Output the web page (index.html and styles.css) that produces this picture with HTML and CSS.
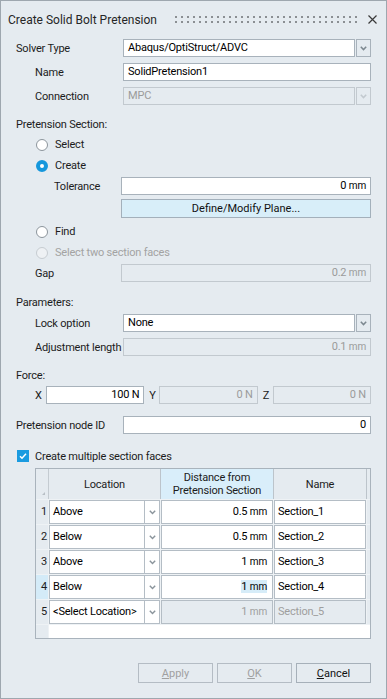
FILE: index.html
```html
<!DOCTYPE html>
<html lang="en">
<head>
    <meta charset="UTF-8">
    <meta name="viewport" content="width=device-width, initial-scale=1.0">
    <title>Create Solid Bolt Pretension</title>
    <link rel="stylesheet" href="styles.css">
</head>
<body>
    <div class="dialog">
        <div class="titlebar">
            <span class="title">Create Solid Bolt Pretension</span>
            <span class="grip"></span>
            <svg class="close" width="9" height="9" viewBox="0 0 9 9"><path d="M0.5 0.5 L8.5 8.5 M8.5 0.5 L0.5 8.5" stroke="#3a3a3a" stroke-width="1.2" fill="none"/></svg>
        </div>

        <div class="body">
            <div class="row first">
                <label class="lbl">Solver Type</label>
                <div class="combo">
                    <div class="field">Abaqus/OptiStruct/ADVC</div>
                    <span class="combo-btn"><svg width="7" height="5" viewBox="0 0 7 5"><path d="M0.8 0.8 L3.5 3.6 L6.2 0.8" stroke="#7d8890" stroke-width="1.5" fill="none"/></svg></span>
                </div>
            </div>
            <div class="row sub">
                <label class="lbl">Name</label>
                <div class="field">SolidPretension1</div>
            </div>
            <div class="row sub">
                <label class="lbl">Connection</label>
                <div class="combo disabled">
                    <div class="field">MPC</div>
                    <span class="combo-btn"><svg width="7" height="5" viewBox="0 0 7 5"><path d="M0.8 0.8 L3.5 3.6 L6.2 0.8" stroke="#c2c9cf" stroke-width="1.5" fill="none"/></svg></span>
                </div>
            </div>

            <div class="section">Pretension Section:</div>
            <div class="row radio-row">
                <span class="radio"></span>Select
            </div>
            <div class="row radio-row">
                <span class="radio checked"></span>Create
            </div>
            <div class="row deep">
                <label class="lbl">Tolerance</label>
                <div class="field num">0 <span class="unit">mm</span></div>
            </div>
            <div class="row deep btn-row">
                <span class="lbl"></span>
                <button class="plane-btn">Define/Modify Plane...</button>
            </div>
            <div class="row radio-row find">
                <span class="radio"></span>Find
            </div>
            <div class="row radio-row muted">
                <span class="radio off"></span>Select two section faces
            </div>
            <div class="row sub wide">
                <label class="lbl">Gap</label>
                <div class="field num disabled">0.2 <span class="unit">mm</span></div>
            </div>

            <div class="section params">Parameters:</div>
            <div class="row sub">
                <label class="lbl">Lock option</label>
                <div class="combo">
                    <div class="field">None</div>
                    <span class="combo-btn"><svg width="7" height="5" viewBox="0 0 7 5"><path d="M0.8 0.8 L3.5 3.6 L6.2 0.8" stroke="#7d8890" stroke-width="1.5" fill="none"/></svg></span>
                </div>
            </div>
            <div class="row sub">
                <label class="lbl">Adjustment length</label>
                <div class="field num disabled">0.1 <span class="unit">mm</span></div>
            </div>

            <div class="section">Force:</div>
            <div class="row force-row">
                <label class="axis">X</label>
                <div class="field num">100 N</div>
                <label class="axis">Y</label>
                <div class="field num disabled">0 N</div>
                <label class="axis">Z</label>
                <div class="field num disabled">0 N</div>
            </div>

            <div class="row node-row">
                <label class="lbl">Pretension node ID</label>
                <div class="field num">0</div>
            </div>

            <div class="row check-row">
                <span class="checkbox"><svg width="12" height="12" viewBox="0 0 12 12"><path d="M3 6.2 L5 8.2 L9 3.8" stroke="#fff" stroke-width="1.5" fill="none"/></svg></span>
                Create multiple section faces
            </div>

            <div class="table">
                <div class="grid">
                    <div class="corner"><span class="corner-mark"></span></div>
                    <div class="th">Location</div>
                    <div class="th active"><span>Distance from<br>Pretension Section</span></div>
                    <div class="th">Name</div>
                    <div class="th end"></div>

                    <div class="rh">1</div>
                    <div class="cell loc"><span class="loc-text">Above</span><span class="cell-btn"><svg width="7" height="5" viewBox="0 0 7 5"><path d="M0.8 0.8 L3.5 3.6 L6.2 0.8" stroke="#8a949b" stroke-width="1.4" fill="none"/></svg></span></div>
                    <div class="cell num">0.5 <span class="unit">mm</span></div>
                    <div class="cell">Section_1</div>
                    <div class="gap-cell"></div>

                    <div class="rh">2</div>
                    <div class="cell loc"><span class="loc-text">Below</span><span class="cell-btn"><svg width="7" height="5" viewBox="0 0 7 5"><path d="M0.8 0.8 L3.5 3.6 L6.2 0.8" stroke="#8a949b" stroke-width="1.4" fill="none"/></svg></span></div>
                    <div class="cell num">0.5 <span class="unit">mm</span></div>
                    <div class="cell">Section_2</div>
                    <div class="gap-cell"></div>

                    <div class="rh">3</div>
                    <div class="cell loc"><span class="loc-text">Above</span><span class="cell-btn"><svg width="7" height="5" viewBox="0 0 7 5"><path d="M0.8 0.8 L3.5 3.6 L6.2 0.8" stroke="#8a949b" stroke-width="1.4" fill="none"/></svg></span></div>
                    <div class="cell num">1 <span class="unit">mm</span></div>
                    <div class="cell">Section_3</div>
                    <div class="gap-cell"></div>

                    <div class="rh current">4</div>
                    <div class="cell loc"><span class="loc-text">Below</span><span class="cell-btn"><svg width="7" height="5" viewBox="0 0 7 5"><path d="M0.8 0.8 L3.5 3.6 L6.2 0.8" stroke="#8a949b" stroke-width="1.4" fill="none"/></svg></span></div>
                    <div class="cell num"><span class="hilite">1 <span class="unit">mm</span></span></div>
                    <div class="cell">Section_4</div>
                    <div class="gap-cell"></div>

                    <div class="rh">5</div>
                    <div class="cell loc"><span class="loc-text">&lt;Select Location&gt;</span><span class="cell-btn"><svg width="7" height="5" viewBox="0 0 7 5"><path d="M0.8 0.8 L3.5 3.6 L6.2 0.8" stroke="#8a949b" stroke-width="1.4" fill="none"/></svg></span></div>
                    <div class="cell num disabled">1 <span class="unit">mm</span></div>
                    <div class="cell disabled">Section_5</div>
                    <div class="gap-cell"></div>

                    <div class="rh"></div>
                    <div class="blank"></div>
                </div>
            </div>

            <div class="actions">
                <button class="btn" disabled><u>A</u>pply</button>
                <button class="btn" disabled><u>O</u>K</button>
                <button class="btn"><u>C</u>ancel</button>
            </div>
        </div>
    </div>
</body>
</html>
```

FILE: styles.css
```css
* {
    box-sizing: border-box;
}
body {
    margin: 0;
    background: #e5ebf0;
    font-family: Roboto, "Liberation Sans", sans-serif;
    font-size: 11px;
    letter-spacing: -0.2px;
    color: #1c1c1c;
}
.dialog {
    width: 387px;
    height: 699px;
    border: 1px solid #9ea7af;
    background: #e5ebf0;
}
.titlebar {
    height: 37px;
    display: flex;
    align-items: center;
    padding: 0 9px 0 7px;
}
.title {
    font-size: 12px;
    letter-spacing: 0;
    color: #262626;
}
.grip {
    margin-left: auto;
    width: 182px;
    height: 7px;
    background:
        linear-gradient(to right, #8b8f93 2px, transparent 2px) 0 0 / 6px 2px repeat-x,
        linear-gradient(to right, #8b8f93 2px, transparent 2px) 0 5px / 6px 2px repeat-x;
}
.close {
    margin-left: 11px;
}
.body {
    padding: 0 15px;
}
.row {
    display: flex;
    align-items: center;
    height: 18px;
    margin-top: 6px;
    white-space: nowrap;
}
.row.first {
    margin-top: 1px;
}
.lbl {
    flex: none;
    width: 107px;
}
.row.sub {
    padding-left: 19px;
}
.row.sub .lbl {
    width: 88px;
}
.row.sub.wide .lbl {
    width: 86px;
}
.row.deep {
    padding-left: 38px;
    margin-top: 2px;
}
.row.deep .lbl {
    width: 67px;
}
.field {
    flex: 1;
    min-width: 0;
    height: 18px;
    line-height: 16px;
    padding: 0 4px;
    background: #fff;
    border: 1px solid #a8b2bb;
    color: #000;
    white-space: nowrap;
    overflow: hidden;
}
.field.num {
    text-align: right;
}
.field.disabled {
    background: #e5ebf0;
    border-color: #c2c9cf;
    color: #9b9b9b;
}
.unit {
    font-size: 10px;
}
.combo {
    flex: 1;
    display: flex;
    gap: 1px;
    height: 18px;
}
.combo-btn {
    flex: none;
    width: 15px;
    height: 18px;
    border: 1px solid #a8b2bb;
    display: flex;
    align-items: center;
    justify-content: center;
}
.combo.disabled .field {
    background: #e5ebf0;
    border-color: #c2c9cf;
    color: #9b9b9b;
}
.combo.disabled .combo-btn {
    border-color: #c2c9cf;
}
.section {
    height: 16px;
    line-height: 16px;
    margin-top: 12px;
}
.section + .row {
    margin-top: 2px;
}
.section.params {
    margin-top: 13px;
}
.section.params + .row {
    margin-top: 3px;
}
.radio-row {
    height: 19px;
    margin-top: 2px;
    padding-left: 20px;
}
.radio-row.find {
    margin-top: 4px;
}
.radio-row.muted {
    color: #a3a3a3;
}
.radio-row + .row.sub {
    margin-top: 2px;
}
.radio {
    width: 12px;
    height: 12px;
    margin-right: 7px;
    border-radius: 50%;
    border: 1px solid #8c959c;
    background: #fff;
}
.radio.checked {
    border: 4px solid #1597dc;
    background: #fff;
}
.radio.off {
    border-color: #c6ccd1;
    background: #eef1f4;
}
.btn-row {
    height: 19px;
}
.row.deep.btn-row {
    margin-top: 4px;
}
.plane-btn {
    flex: 1;
    height: 19px;
    padding: 0;
    font: inherit;
    color: #111;
    background: #d8eef9;
    border: 1px solid #a3b0bb;
}
.force-row {
    padding-left: 19px;
}
.axis {
    flex: none;
    width: 15px;
    padding-left: 5px;
}
.axis:first-child {
    width: 11px;
    padding-left: 0;
}
.node-row {
    margin-top: 12px;
}
.node-row .lbl {
    width: 107px;
}
.check-row {
    margin-top: 13px;
    padding-left: 1px;
}
.checkbox {
    width: 12px;
    height: 12px;
    margin-right: 6px;
    background: #1a9be0;
    display: flex;
}
.table {
    margin: 3px 0 0 19px;
    border: 1px solid #a9b3bc;
    height: 171px;
}
.grid {
    display: grid;
    grid-template-columns: 12px 111px 112px 92px 1fr;
    grid-template-rows: 30px repeat(5, 24px) 1fr;
    gap: 1px;
    height: 100%;
    background: #eef2f5;
}
.corner {
    background: #e5ebf0;
    border-right: 1px solid #c4cbd1;
    margin-right: -1px;
    position: relative;
}
.corner-mark {
    position: absolute;
    right: 3px;
    bottom: 4px;
    width: 0;
    height: 0;
    border-left: 3px solid transparent;
    border-bottom: 3px solid #b8bfc5;
}
.th {
    background: #e5ebf0;
    display: flex;
    align-items: center;
    justify-content: center;
    text-align: center;
    line-height: 13px;
    border-right: 1px solid #bcc4cb;
    margin-right: -1px;
}
.th.active {
    background: #d9eefa;
}
.th.end {
    border-right: none;
    margin-right: 0;
}
.rh {
    background: #e5ebf0;
    text-align: right;
    padding-right: 1px;
    line-height: 24px;
}
.rh.current {
    background: #d4ebf8;
}
.cell {
    background: #fff;
    border: 1px solid #b4bdc5;
    line-height: 22px;
    padding: 0 3px;
    color: #000;
    white-space: nowrap;
    overflow: hidden;
}
.cell.num {
    text-align: right;
    padding-right: 5px;
}
.cell.disabled {
    background: #e5ebf0;
    color: #9e9e9e;
}
.cell.loc {
    display: flex;
    padding: 0 0 0 3px;
}
.loc-text {
    flex: 1;
}
.cell-btn {
    flex: none;
    width: 15px;
    border-left: 1px solid #b4bdc5;
    display: flex;
    align-items: center;
    justify-content: center;
}
.hilite {
    background: #d6ecf8;
}
.gap-cell {
    background: #e5ebf0;
}
.blank {
    grid-column: 2 / 6;
    background: #fff;
}
.actions {
    display: flex;
    justify-content: flex-end;
    gap: 4px;
    margin-top: 24px;
}
.btn {
    width: 75px;
    height: 20px;
    padding: 0;
    font: inherit;
    color: #111;
    background: #e5ebf0;
    border: 1px solid #a6b0b9;
}
.btn:disabled {
    color: #a0a0a0;
    border-color: #b4bcc4;
}
```
